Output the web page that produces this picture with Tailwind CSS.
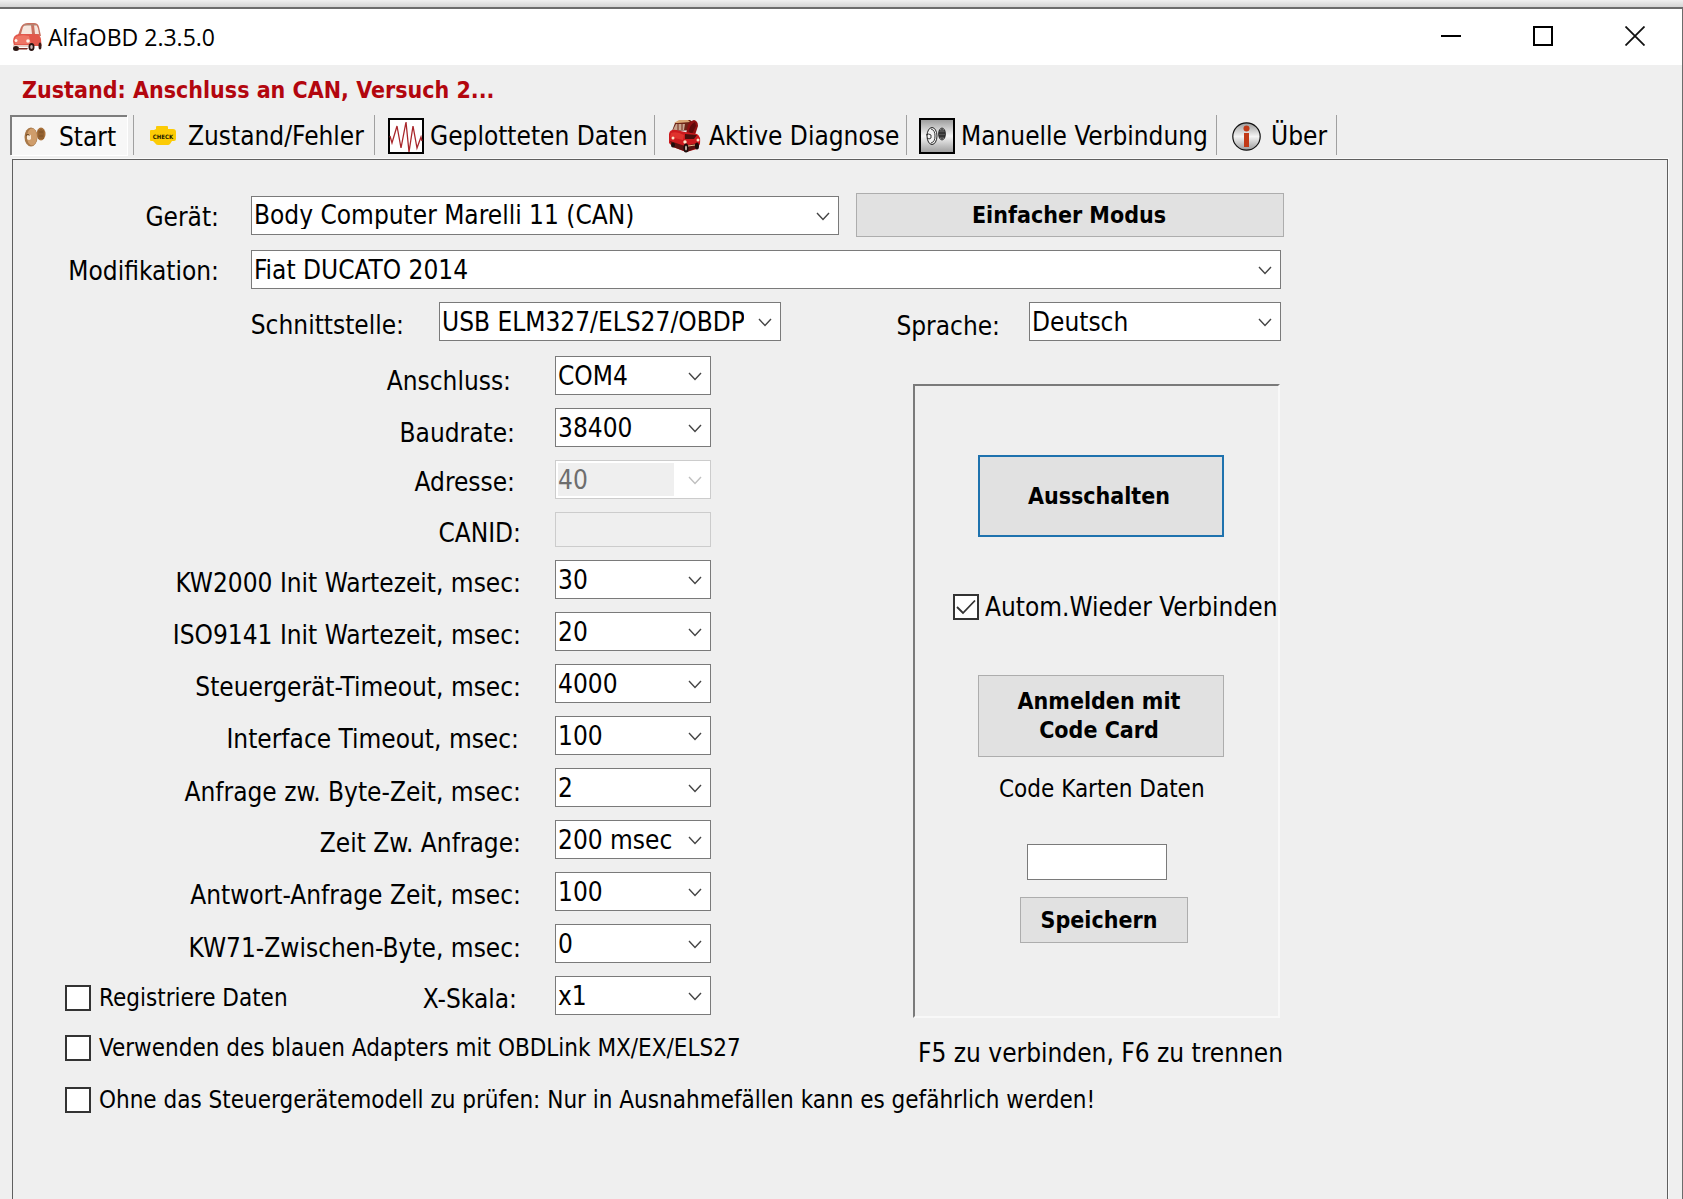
<!DOCTYPE html>
<html lang="de">
<head>
<meta charset="utf-8">
<meta name="viewport" content="width=device-width, initial-scale=1">
<title>AlfaOBD 2.3.5.0</title>
<script src="https://cdn.jsdelivr.net/npm/@tailwindcss/browser@4"></script>
</head>
<body class="min-h-screen flex flex-col bg-[#efefef] text-black text-[26px] leading-7 whitespace-nowrap font-['DejaVu_Sans_Condensed','DejaVu_Sans',sans-serif]">

<svg class="hidden" aria-hidden="true">
  <symbol id="chevron" viewBox="0 0 14 9"><path d="M1 1l6 6.5L13 1" fill="none" stroke="currentColor" stroke-width="1.4"/></symbol>
</svg>

<div class="h-[7px] bg-linear-to-b from-[#f0f0f0] to-[#d4d4d4]"></div>

<div class="flex-1 flex flex-col border-t-2 border-r border-[#6c6c6c]">
  <!-- title bar -->
  <header class="h-14 flex items-center bg-white pl-3">
    <svg class="w-[30px] h-[30px]" viewBox="0 0 30 30" aria-hidden="true">
      <path d="M6 13L9 5Q11 1 16 1h6q4 0 5 4l2 9z" fill="#c9705f"/>
      <path d="M9 12l2-7q1-2 4-2h4l1 9zM22 3h2q2 1 3 9h-4z" fill="#f6e6de"/><path d="M12 3h12" stroke="#a8907f" stroke-width="1"/>
      <path d="M1 19q0-6 6-7h16q5 0 6 5l.5 7H2z" fill="#e2574b"/>
      <path d="M3 16q4-4 14-2l2 8H3z" fill="#ee7565"/>
      <circle cx="4" cy="18.500" r="1.500" fill="#fff3ea"/><circle cx="16" cy="19" r="1.800" fill="#fff3ea"/>
      <path d="M1 23h16l1 2H1z" fill="#e9cfc6"/>
      <ellipse cx="4" cy="26.500" rx="3" ry="2.500" fill="#2a1512"/><ellipse cx="19.500" cy="25" rx="3" ry="4" fill="#2a1512"/><ellipse cx="19.500" cy="25" rx="1.300" ry="2" fill="#cbb"/>
      <ellipse cx="28" cy="24" rx="1.500" ry="3.500" fill="#3a1c18"/><path d="M6 26h10l-1 1.500H7z" fill="#7b2a22"/>
    </svg>
    <h1 class="ml-[6px] text-[23px] font-['Open_Sans','Noto_Sans',sans-serif]">AlfaOBD 2.3.5.0</h1>
    <div class="ml-auto mr-px flex h-[54px] self-start">
      <button class="w-[92px] flex items-center justify-center" aria-label="Minimieren"><svg class="w-5 h-5" viewBox="0 0 20 20"><path d="M0 10h20" stroke="#000" stroke-width="2"/></svg></button>
      <button class="w-[92px] flex items-center justify-center" aria-label="Maximieren"><svg class="w-5 h-5" viewBox="0 0 20 20"><path d="M1 1h18v18H1z" fill="none" stroke="#000" stroke-width="2"/></svg></button>
      <button class="w-[92px] flex items-center justify-center" aria-label="Schließen"><svg class="w-5 h-5" viewBox="0 0 20 20"><path d="M.5.5l19 19M19.500.5l-19 19" stroke="#111" stroke-width="1.800"/></svg></button>
    </div>
  </header>

  <p class="h-[50px] flex items-center pl-[22px] text-[23px] font-bold text-[#b3060e]">Zustand: Anschluss an CAN, Versuch 2...</p>

  <!-- tabs -->
  <nav class="h-10 flex pl-[10px]">
    <button class="w-[117px] mr-[6px] flex items-center pl-3 pt-[2px] bg-[#f7f7f7] border-t-2 border-l-2 border-[#7d7d7d] shadow-[1px_1px_0_#fff]">
      <svg class="w-[22px] h-[22px] mr-[13px]" viewBox="0 0 22 22" aria-hidden="true">
        <ellipse cx="17" cy="8" rx="4.500" ry="6.500" fill="#a9713a"/><ellipse cx="7" cy="11" rx="6.500" ry="9.500" fill="#a87848"/>
        <ellipse cx="8" cy="11" rx="5" ry="8.500" fill="#cf9d6b"/><path d="M3 9.500q3-2 4 0v3.500q-2 2-4 0" fill="#f7ead9"/><path d="M2 9.500q2-2 3.500 0" fill="none" stroke="#6d4520" stroke-width="1.200"/>
        <path d="M15 4v9M17 3v10M19 4v9M15 6h4M15 10h4" stroke="#7d5228" stroke-width="1"/>
      </svg>Start</button>
    <button class="w-[242px] flex items-center pl-4 pt-[2px] border-x border-[#a0a0a0]">
      <svg class="w-[26px] h-5 mr-3" viewBox="0 0 26 20" aria-hidden="true">
        <path d="M0 5q0-1 1-1h3l2-1V1q0-1 1-1h10q1 0 1 1v2h5q3 0 3 3v7q0 2-2 2h-2l-2 3q-1 1-2 1H8q-2 0-3-2l-2-2H1q-1 0-1-1z" fill="#fccb05"/>
        <text x="13" y="12.500" text-anchor="middle" font-size="6" font-weight="bold" font-family="DejaVu Sans Condensed" fill="#221a00">CHECK</text>
      </svg>Zustand/Fehler</button>
    <button class="w-[280px] flex items-center pl-[13px] pt-[2px] border-r border-[#a0a0a0]">
      <svg class="w-9 h-9 mr-[6px]" viewBox="0 0 36 36" aria-hidden="true">
        <path d="M1 1h34v34H1z" fill="#fff" stroke="#000" stroke-width="2"/>
        <path d="M2 18l2 7 5-17 4 22 5-26 3 30 4-26 4 22 4-11 1 4" fill="none" stroke="#a8262b" stroke-width="1.300"/>
      </svg>Geplotteten Daten</button>
    <button class="w-[252px] flex items-center pl-[13px] pt-[2px] border-r border-[#a0a0a0]">
      <svg class="w-[33px] h-[34px] mr-2" viewBox="0 0 33 34" aria-hidden="true">
        <path d="M4 12l3-8 6-3 9 0 5 4 1 6z" fill="#6e2417"/><path d="M6 4l5-3 9 0 2 2-12 1z" fill="#d9a877"/>
        <path d="M5 11l3-6h9l-1 6z" fill="#c9a48e"/><path d="M10 5v6M14 5v6" stroke="#6e2417"/>
        <path d="M18 15l2-9q2-4 6-5 4 1 4 6l-3 9z" fill="#8f1012"/><path d="M21 13q0-7 6-10l1 4-4 8z" fill="#5f0a0b"/>
        <path d="M1 15q1-5 7-4l9 2 12 2q4 2 3 10l-3 5-11 3-13-5-4-4z" fill="#cc1a1e"/>
        <path d="M3 14q6-2 13 2l-1 5-13-3z" fill="#e0322d"/><path d="M17 15l12 1-3 4-9 0z" fill="#4a0f0d"/>
        <circle cx="5" cy="19" r="1.500" fill="#ffe6c9"/><circle cx="17" cy="23" r="1.700" fill="#ffe6c9"/><circle cx="30" cy="21" r="1.500" fill="#ffe6c9"/>
        <path d="M2 22l15 5 13-3-1 5-10 4-14-5z" fill="#5c1210"/><ellipse cx="18" cy="29" rx="2.500" ry="4.500" fill="#1b0c0b"/><ellipse cx="18" cy="29" rx="1" ry="2.500" fill="#c9b4aa"/>
        <ellipse cx="29" cy="27" rx="2" ry="3.500" fill="#1b0c0b"/><ellipse cx="5" cy="26" rx="2" ry="2.500" fill="#1b0c0b"/><path d="M20 27l7-1" stroke="#e9c48e"/>
      </svg>Aktive Diagnose</button>
    <button class="w-[310px] flex items-center pl-[12px] pt-[2px] border-r border-[#a0a0a0]">
      <svg class="w-9 h-9 mr-[6px]" viewBox="0 0 36 36" aria-hidden="true">
        <defs><linearGradient id="metal" x2="0" y2="1"><stop stop-color="#9a9a9a"/><stop offset=".5" stop-color="#f5f5f5"/><stop offset="1" stop-color="#9a9a9a"/></linearGradient></defs>
        <path d="M1 1h34v34H1z" fill="url(#metal)" stroke="#000" stroke-width="2"/>
        <ellipse cx="13" cy="18" rx="5" ry="8.500" fill="#f2f2f2" stroke="#222" stroke-width="1"/><path d="M7 17q3-2 5 0v3q-2 2-4 0M12 11q4 1 4 7t-4 7" fill="none" stroke="#222" stroke-width=".9"/>
        <ellipse cx="23" cy="16" rx="3.500" ry="6" fill="#8a8a8a" stroke="#222" stroke-width=".8"/><path d="M21 12v8M23 11v10M25 12v8M20 15h6M20 18h6" stroke="#111" stroke-width=".9"/>
      </svg>Manuelle Verbindung</button>
    <button class="w-[120px] flex items-center pl-[15px] pt-[2px] border-r border-[#a0a0a0]">
      <svg class="w-[29px] h-[29px] mr-[10px]" viewBox="0 0 29 29" aria-hidden="true">
        <circle cx="14.500" cy="14.500" r="13.700" fill="url(#metal)" stroke="#111" stroke-width="1.200"/>
        <circle cx="14.500" cy="6.500" r="3" fill="#c23a17"/><path d="M12 11h5v14h-5z" fill="#c23a17"/>
      </svg>Über</button>
  </nav>

  <!-- start page -->
  <main class="flex-1 mt-1 ml-3 mr-[14px] pt-[33px] border-t border-x border-[#5f5f5f] shadow-[1px_-1px_0_#fafafa]">
    <form class="flex flex-col items-start">
      <div class="flex items-center">
        <label for="geraet" class="w-[206px] mr-8 pt-1 text-right">Gerät:</label>
        <div class="relative w-[588px] h-[39px]">
          <select id="geraet" class="appearance-none w-full h-full pl-[2px] pr-9 bg-white border border-[#7a7a7a]"><option>Body Computer Marelli 11 (CAN)</option></select>
          <svg class="absolute right-[9px] top-[16px] w-[14px] h-[9px] text-[#444] pointer-events-none"><use href="#chevron"/></svg>
        </div>
        <button type="button" class="ml-[17px] w-[428px] h-11 pr-[2px] bg-[#e1e1e1] border border-[#adadad] text-[23px] font-bold">Einfacher Modus</button>
      </div>

      <div class="mt-[13px] flex items-center">
        <label for="modifikation" class="w-[206px] mr-8 pt-[2px] text-right">Modifikation:</label>
        <div class="relative w-[1030px] h-[39px]">
          <select id="modifikation" class="appearance-none w-full h-full pl-[2px] pr-9 bg-white border border-[#7a7a7a]"><option>Fiat DUCATO 2014</option></select>
          <svg class="absolute right-[9px] top-[16px] w-[14px] h-[9px] text-[#444] pointer-events-none"><use href="#chevron"/></svg>
        </div>
      </div>

      <div class="mt-[13px] flex items-center">
        <label for="schnittstelle" class="w-[391px] mr-[35px] pt-[6px] text-right">Schnittstelle:</label>
        <div class="relative w-[342px] h-[39px]">
          <select id="schnittstelle" class="appearance-none w-full h-full pl-[2px] pr-9 bg-white border border-[#7a7a7a]"><option>USB ELM327/ELS27/OBDPro</option></select>
          <svg class="absolute right-[9px] top-[16px] w-[14px] h-[9px] text-[#444] pointer-events-none"><use href="#chevron"/></svg>
        </div>
        <label for="sprache" class="w-[219px] mr-[29px] pt-2 text-right">Sprache:</label>
        <div class="relative w-[252px] h-[39px]">
          <select id="sprache" class="appearance-none w-full h-full pl-[2px] pr-9 bg-white border border-[#7a7a7a]"><option>Deutsch</option></select>
          <svg class="absolute right-[9px] top-[16px] w-[14px] h-[9px] text-[#444] pointer-events-none"><use href="#chevron"/></svg>
        </div>
      </div>

      <div class="mt-[15px] flex items-start">
        <!-- connection settings -->
        <div class="w-[698px] flex flex-col gap-[13px]">
          <div class="flex h-[39px] items-center">
            <label for="anschluss" class="w-[508px] mr-[34px] pr-[10px] pt-[10px] text-right">Anschluss:</label>
            <div class="relative w-[156px] h-full">
              <select id="anschluss" class="appearance-none w-full h-full pl-[2px] pr-9 bg-white border border-[#7a7a7a]"><option>COM4</option></select>
              <svg class="absolute right-[9px] top-[16px] w-[14px] h-[9px] text-[#444] pointer-events-none"><use href="#chevron"/></svg>
            </div>
          </div>
          <div class="flex h-[39px] items-center">
            <label for="baudrate" class="w-[508px] mr-[34px] pr-[6px] pt-[10px] text-right">Baudrate:</label>
            <div class="relative w-[156px] h-full">
              <select id="baudrate" class="appearance-none w-full h-full pl-[2px] pr-9 bg-white border border-[#7a7a7a]"><option>38400</option></select>
              <svg class="absolute right-[9px] top-[16px] w-[14px] h-[9px] text-[#444] pointer-events-none"><use href="#chevron"/></svg>
            </div>
          </div>
          <div class="flex h-[39px] items-center">
            <label for="adresse" class="w-[508px] mr-[34px] pr-[6px] pt-1 text-right">Adresse:</label>
            <div class="relative w-[156px] h-full p-[2px] bg-white border border-[#cccccc]">
              <select id="adresse" disabled class="appearance-none block w-[116px] h-full bg-[#efefef] text-[#6d6d6d] opacity-100"><option>40</option></select>
              <svg class="absolute right-[8px] top-[15px] w-[14px] h-[9px] text-[#bfbfbf] pointer-events-none"><use href="#chevron"/></svg>
            </div>
          </div>
          <div class="flex h-[35px] items-center">
            <label for="canid" class="w-[508px] mr-[34px] pt-[6px] text-right">CANID:</label>
            <input id="canid" type="text" disabled class="w-[156px] h-full bg-[#efefef] border border-[#cccccc]">
          </div>
          <div class="flex h-[39px] items-center">
            <label for="kw2000" class="w-[508px] mr-[34px] pt-[6px] text-right">KW2000 Init Wartezeit, msec:</label>
            <div class="relative w-[156px] h-full">
              <select id="kw2000" class="appearance-none w-full h-full pl-[2px] pr-9 bg-white border border-[#7a7a7a]"><option>30</option></select>
              <svg class="absolute right-[9px] top-[16px] w-[14px] h-[9px] text-[#444] pointer-events-none"><use href="#chevron"/></svg>
            </div>
          </div>
          <div class="flex h-[39px] items-center">
            <label for="iso9141" class="w-[508px] mr-[34px] pt-[6px] text-right">ISO9141 Init Wartezeit, msec:</label>
            <div class="relative w-[156px] h-full">
              <select id="iso9141" class="appearance-none w-full h-full pl-[2px] pr-9 bg-white border border-[#7a7a7a]"><option>20</option></select>
              <svg class="absolute right-[9px] top-[16px] w-[14px] h-[9px] text-[#444] pointer-events-none"><use href="#chevron"/></svg>
            </div>
          </div>
          <div class="flex h-[39px] items-center">
            <label for="steuergeraet" class="w-[508px] mr-[34px] pt-[6px] text-right">Steuergerät-Timeout, msec:</label>
            <div class="relative w-[156px] h-full">
              <select id="steuergeraet" class="appearance-none w-full h-full pl-[2px] pr-9 bg-white border border-[#7a7a7a]"><option>4000</option></select>
              <svg class="absolute right-[9px] top-[16px] w-[14px] h-[9px] text-[#444] pointer-events-none"><use href="#chevron"/></svg>
            </div>
          </div>
          <div class="flex h-[39px] items-center">
            <label for="interface" class="w-[508px] mr-[34px] pr-[2px] pt-[6px] text-right">Interface Timeout, msec:</label>
            <div class="relative w-[156px] h-full">
              <select id="interface" class="appearance-none w-full h-full pl-[2px] pr-9 bg-white border border-[#7a7a7a]"><option>100</option></select>
              <svg class="absolute right-[9px] top-[16px] w-[14px] h-[9px] text-[#444] pointer-events-none"><use href="#chevron"/></svg>
            </div>
          </div>
          <div class="flex h-[39px] items-center">
            <label for="bytezeit" class="w-[508px] mr-[34px] pt-2 text-right">Anfrage zw. Byte-Zeit, msec:</label>
            <div class="relative w-[156px] h-full">
              <select id="bytezeit" class="appearance-none w-full h-full pl-[2px] pr-9 bg-white border border-[#7a7a7a]"><option>2</option></select>
              <svg class="absolute right-[9px] top-[16px] w-[14px] h-[9px] text-[#444] pointer-events-none"><use href="#chevron"/></svg>
            </div>
          </div>
          <div class="flex h-[39px] items-center">
            <label for="zwanfrage" class="w-[508px] mr-[34px] pt-[6px] text-right">Zeit Zw. Anfrage:</label>
            <div class="relative w-[156px] h-full">
              <select id="zwanfrage" class="appearance-none w-full h-full pl-[2px] pr-9 bg-white border border-[#7a7a7a]"><option>200 msec</option></select>
              <svg class="absolute right-[9px] top-[16px] w-[14px] h-[9px] text-[#444] pointer-events-none"><use href="#chevron"/></svg>
            </div>
          </div>
          <div class="flex h-[39px] items-center">
            <label for="antwort" class="w-[508px] mr-[34px] pt-[6px] text-right">Antwort-Anfrage Zeit, msec:</label>
            <div class="relative w-[156px] h-full">
              <select id="antwort" class="appearance-none w-full h-full pl-[2px] pr-9 bg-white border border-[#7a7a7a]"><option>100</option></select>
              <svg class="absolute right-[9px] top-[16px] w-[14px] h-[9px] text-[#444] pointer-events-none"><use href="#chevron"/></svg>
            </div>
          </div>
          <div class="flex h-[39px] items-center">
            <label for="kw71" class="w-[508px] mr-[34px] pt-2 text-right">KW71-Zwischen-Byte, msec:</label>
            <div class="relative w-[156px] h-full">
              <select id="kw71" class="appearance-none w-full h-full pl-[2px] pr-9 bg-white border border-[#7a7a7a]"><option>0</option></select>
              <svg class="absolute right-[9px] top-[16px] w-[14px] h-[9px] text-[#444] pointer-events-none"><use href="#chevron"/></svg>
            </div>
          </div>
          <div class="flex h-[39px] items-center pl-[52px]">
            <label class="flex items-center pt-1 text-[24px]"><input type="checkbox" class="appearance-none shrink-0 w-[26px] h-[26px] mr-2 bg-white border-2 border-[#333]">Registriere Daten</label>
            <label for="skala" class="ml-auto mr-[34px] pr-1 pt-[6px] text-right">X-Skala:</label>
            <div class="relative w-[156px] h-full">
              <select id="skala" class="appearance-none w-full h-full pl-[2px] pr-9 bg-white border border-[#7a7a7a]"><option>x1</option></select>
              <svg class="absolute right-[9px] top-[16px] w-[14px] h-[9px] text-[#444] pointer-events-none"><use href="#chevron"/></svg>
            </div>
          </div>
          <label class="mt-[6px] ml-[52px] flex items-center text-[24px]"><input type="checkbox" class="appearance-none shrink-0 w-[26px] h-[26px] mr-2 bg-white border-2 border-[#333]">Verwenden des blauen Adapters mit OBDLink MX/EX/ELS27</label>
        </div>

        <!-- connection actions -->
        <div class="ml-[202px] mt-7">
          <div class="w-[367px] h-[634px] flex flex-col items-start pt-[69px] border-2 border-t-[#7a7a7a] border-l-[#7a7a7a] border-r-[#f8f8f8] border-b-[#f8f8f8]">
            <button type="button" class="ml-[63px] w-[246px] h-[82px] pr-1 bg-[#e1e1e1] border-2 border-[#1e72ae] text-[23px] font-bold">Ausschalten</button>
            <label class="mt-14 ml-[38px] flex items-center">
              <span class="relative mr-[6px] w-[26px] h-[26px]">
                <input type="checkbox" checked class="peer appearance-none block w-full h-full bg-white border-2 border-[#333]">
                <svg class="absolute inset-0 hidden peer-checked:block pointer-events-none" viewBox="0 0 26 26" aria-hidden="true"><path d="M4 13l6 6L22 6.500" fill="none" stroke="#333" stroke-width="1.800"/></svg>
              </span>Autom.Wieder Verbinden</label>
            <button type="button" class="mt-[54px] ml-[63px] w-[246px] h-[82px] pr-1 bg-[#e1e1e1] border border-[#adadad] text-[23px] leading-[29px] font-bold">Anmelden mit<br>Code Card</button>
            <label for="codekarte" class="mt-[18px] ml-[84px] text-[24px]">Code Karten Daten</label>
            <input id="codekarte" type="text" class="mt-[41px] ml-28 w-[140px] h-9 px-1 bg-white border border-[#7a7a7a]">
            <button type="button" class="mt-[17px] ml-[105px] w-[168px] h-[46px] pr-[10px] bg-[#e1e1e1] border border-[#adadad] text-[23px] font-bold">Speichern</button>
          </div>
          <p class="mt-[21px] ml-[5px]">F5 zu verbinden, F6 zu trennen</p>
        </div>
      </div>

      <label class="mt-[19px] ml-[52px] flex items-center text-[24px]"><input type="checkbox" class="appearance-none shrink-0 w-[26px] h-[26px] mr-2 bg-white border-2 border-[#333]">Ohne das Steuergerätemodell zu prüfen: Nur in Ausnahmefällen kann es gefährlich werden!</label>
    </form>
  </main>
</div>
</body>
</html>
